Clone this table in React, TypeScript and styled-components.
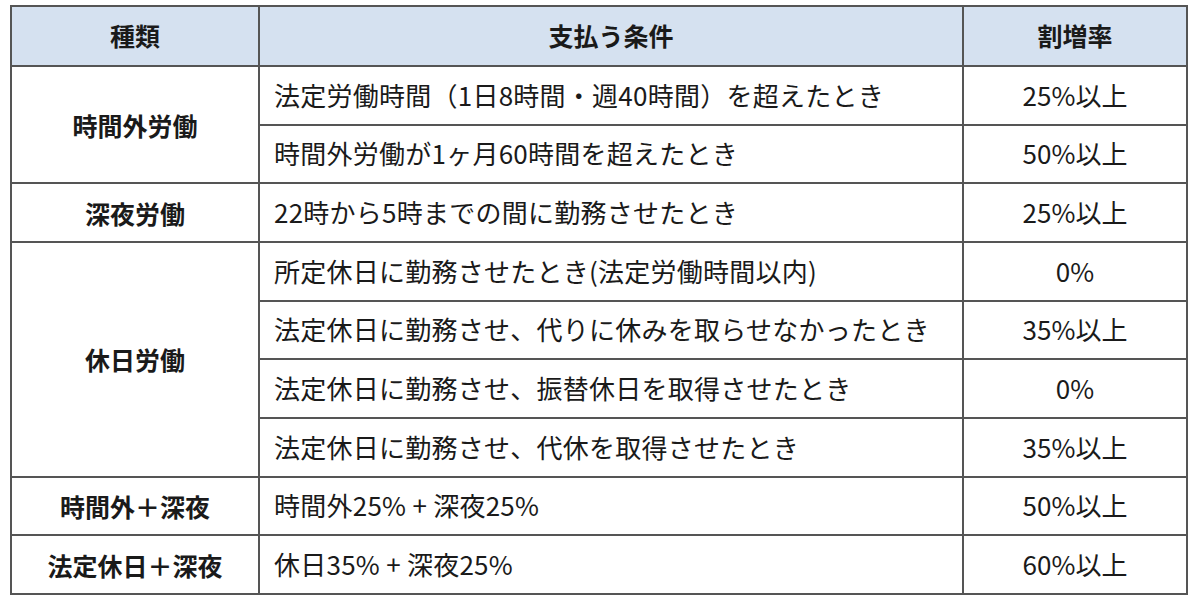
import React from 'react';
import styled, { createGlobalStyle } from 'styled-components';

const GlobalStyle = createGlobalStyle`
  html, body {
    margin: 0;
    padding: 0;
    background: #ffffff;
  }
  body {
    font-family: "Noto Sans CJK JP", "Noto Sans", sans-serif;
    color: #1a1a1a;
  }
`;

const LINE = '2px solid #555555';

type Row = { cond: string; rate: string; lightTop?: boolean };
type Group = { kind: string; rows: Row[] };

const GROUPS: Group[] = [
  {
    kind: '時間外労働',
    rows: [
      { cond: '法定労働時間（1日8時間・週40時間）を超えたとき', rate: '25%以上' },
      { cond: '時間外労働が1ヶ月60時間を超えたとき', rate: '50%以上', lightTop: true },
    ],
  },
  { kind: '深夜労働', rows: [{ cond: '22時から5時までの間に勤務させたとき', rate: '25%以上' }] },
  {
    kind: '休日労働',
    rows: [
      { cond: '所定休日に勤務させたとき(法定労働時間以内)', rate: '0%' },
      { cond: '法定休日に勤務させ、代りに休みを取らせなかったとき', rate: '35%以上' },
      { cond: '法定休日に勤務させ、振替休日を取得させたとき', rate: '0%' },
      { cond: '法定休日に勤務させ、代休を取得させたとき', rate: '35%以上' },
    ],
  },
  { kind: '時間外＋深夜', rows: [{ cond: '時間外25% + 深夜25%', rate: '50%以上' }] },
  { kind: '法定休日＋深夜', rows: [{ cond: '休日35% + 深夜25%', rate: '60%以上' }] },
];

const Page = styled.div`
  padding: 5px 0 0 10px;
`;

const Table = styled.table`
  width: 1176px;
  border-collapse: collapse;
  table-layout: fixed;
  border: ${LINE};
`;

const HeadCell = styled.th`
  height: 56px;
  background: #d5e1f0;
  border: ${LINE};
  font-size: 25px;
  font-weight: 700;
  text-align: center;
  padding: 0 0 2px;
`;

const KindCell = styled.td`
  border: ${LINE};
  font-size: 25px;
  font-weight: 700;
  text-align: center;
  padding: 0;
`;

const CondCell = styled.td<{ $light?: boolean }>`
  height: 54.67px;
  border: ${LINE};
  border-top: ${({ $light }) => ($light ? '1px solid #bdbdbd' : LINE)};
  font-size: 26px;
  letter-spacing: 0.25px;
  padding: 0 0 2px 14px;
  white-space: nowrap;
`;

const RateCell = styled.td<{ $light?: boolean }>`
  border: ${LINE};
  border-top: ${({ $light }) => ($light ? '1px solid #bdbdbd' : LINE)};
  font-size: 26px;
  text-align: center;
  padding: 0 0 2px;
`;

export default function App() {
  return (
    <Page>
      <GlobalStyle />
      <Table>
        <colgroup>
          <col style={{ width: 248 }} />
          <col style={{ width: 704 }} />
          <col style={{ width: 224 }} />
        </colgroup>
        <thead>
          <tr>
            <HeadCell>種類</HeadCell>
            <HeadCell>支払う条件</HeadCell>
            <HeadCell>割増率</HeadCell>
          </tr>
        </thead>
        <tbody>
          {GROUPS.map((g) =>
            g.rows.map((r, i) => (
              <tr key={g.kind + i}>
                {i === 0 && <KindCell rowSpan={g.rows.length}>{g.kind}</KindCell>}
                <CondCell $light={r.lightTop}>{r.cond}</CondCell>
                <RateCell $light={r.lightTop}>{r.rate}</RateCell>
              </tr>
            ))
          )}
        </tbody>
      </Table>
    </Page>
  );
}
